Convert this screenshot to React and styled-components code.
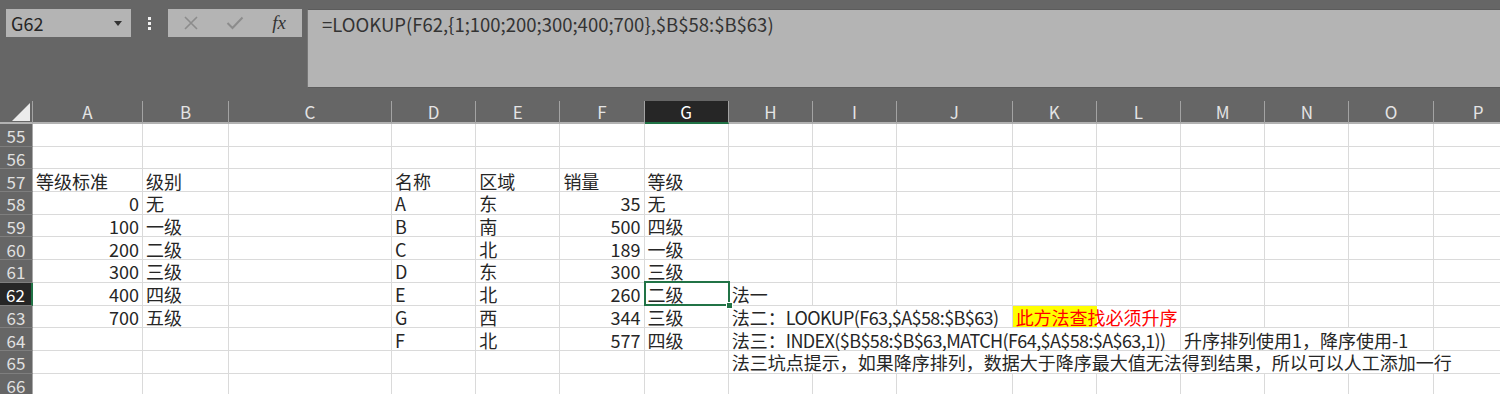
import React from "react";
import styled, { createGlobalStyle, css } from "styled-components";

const COLS =
  "33px 110px 86px 163px repeat(6, 84.2px) 115.5px repeat(5, 84.2px) 90px";
const LETTERS = "ABCDEFGHIJKLMNOP".split("");
const GREEN = "#217346";
const GRID = "#dadada";

const GlobalStyle = createGlobalStyle`
  html, body {
    margin: 0;
    padding: 0;
    background: #ffffff;
    overflow: hidden;
  }
  body {
    font-family: "Noto Sans CJK SC", "Noto Sans", sans-serif;
  }
`;

const Window = styled.div`
  width: 1500px;
  height: 394px;
  overflow: hidden;
  background: #ffffff;
`;

const TopBar = styled.div`
  height: 101px;
  box-sizing: border-box;
  background: #666666;
  display: flex;
  align-items: flex-start;
  padding: 9px 0 0 6px;
`;

const NameBox = styled.div`
  width: 125px;
  height: 28px;
  box-sizing: border-box;
  background: #b4b4b4;
  display: flex;
  align-items: center;
  justify-content: space-between;
  padding: 0 9px 0 5px;
  font-size: 18px;
  color: #262626;
`;

const DropArrow = styled.span`
  width: 0;
  height: 0;
  border-left: 4.5px solid transparent;
  border-right: 4.5px solid transparent;
  border-top: 5px solid #333333;
`;

const Kebab = styled.div`
  width: 3px;
  margin: 8px 17px 0 17px;
  display: flex;
  flex-direction: column;
  gap: 2px;

  span {
    width: 3px;
    height: 3px;
    background: #f2f2f2;
  }
`;

const FxBox = styled.div`
  width: 134px;
  height: 28px;
  box-sizing: border-box;
  background: #b4b4b4;
  display: grid;
  grid-template-columns: repeat(3, 44px);
  align-items: center;
  justify-items: center;
  padding-left: 1px;
`;

const FxLabel = styled.span`
  font-family: "Liberation Serif", "DejaVu Serif", serif;
  font-style: italic;
  font-size: 19px;
  color: #333333;
  line-height: 1;
  margin-top: -2px;
`;

const FormulaInput = styled.div`
  flex: 1;
  height: 79px;
  margin-left: 5px;
  box-sizing: border-box;
  background: #b4b4b4;
  border-top: 1px solid #5c5c5c;
  border-bottom: 1px solid #5c5c5c;
  border-left: 1px solid #777777;
  padding: 3px 0 0 14px;
  font-size: 18.5px;
  line-height: 22px;
  color: #333333;
  white-space: nowrap;
`;

const Row = styled.div`
  display: grid;
  grid-template-columns: ${COLS};
  height: ${({ $h }) => $h};
`;

const Corner = styled.div`
  background: #666666;
  border-right: 1px solid #a3a3a3;
  border-bottom: 2px solid #b2b2b2;
  display: flex;
  align-items: flex-end;
  justify-content: flex-end;
  padding: 0 2px 1px 0;

  span {
    width: 18px;
    height: 18px;
    background: #ececec;
    clip-path: polygon(100% 0, 100% 100%, 0 100%);
  }
`;

const ColHeader = styled.div`
  background: ${({ $active }) => ($active ? "#262626" : "#666666")};
  color: ${({ $active }) => ($active ? "#ffffff" : "#e4e4e4")};
  border-right: 1px solid #a3a3a3;
  border-bottom: 2px solid ${({ $active }) => ($active ? GREEN : "#b2b2b2")};
  display: flex;
  align-items: center;
  justify-content: center;
  font-size: 17px;
  line-height: 1;
`;

const RowHeader = styled.div`
  background: ${({ $active }) => ($active ? "#262626" : "#666666")};
  color: ${({ $active }) => ($active ? "#ffffff" : "#e0e0e0")};
  border-bottom: 1px solid #7e7e7e;
  border-right: ${({ $active }) =>
    $active ? `2px solid ${GREEN}` : "1px solid #a8a8a8"};
  display: flex;
  align-items: center;
  justify-content: center;
  font-size: 17px;
  line-height: 1;
  padding-top: 2px;
`;

const Cell = styled.div`
  grid-column: span ${({ $span }) => $span || 1};
  position: relative;
  box-sizing: border-box;
  background: #ffffff;
  border-right: 1px solid ${GRID};
  border-bottom: 1px solid ${GRID};
  display: flex;
  align-items: center;
  justify-content: ${({ $num }) => ($num ? "flex-end" : "flex-start")};
  padding: 1px 3px 0 3px;
  font-size: 18px;
  line-height: 20px;
  color: ${({ $color }) => $color || "#262626"};
  white-space: nowrap;
  overflow: visible;

  ${({ $fill }) =>
    $fill &&
    css`
      background: linear-gradient(
        to right,
        ${$fill} 0,
        ${$fill} 84px,
        #ffffff 84px
      );
    `}

  ${({ $selected }) =>
    $selected &&
    css`
      &::after {
        content: "";
        position: absolute;
        left: -1px;
        top: -2px;
        right: -2px;
        bottom: -1px;
        border: 2px solid ${GREEN};
        z-index: 2;
      }
      &::before {
        content: "";
        position: absolute;
        right: -5px;
        bottom: -4px;
        width: 5px;
        height: 5px;
        background: ${GREEN};
        border: 1px solid #ffffff;
        z-index: 3;
      }
    `}
`;

// latin runs in the formula notes are set a little tighter than Noto's default
const Latin = styled.span`
  letter-spacing: -0.6px;
`;

const CrossIcon = () => (
  <svg width="16" height="16" viewBox="0 0 16 16">
    <path d="M2 2 L14 14 M14 2 L2 14" stroke="#8c8c8c" strokeWidth="1.6" fill="none" />
  </svg>
);

const CheckIcon = () => (
  <svg width="18" height="14" viewBox="0 0 18 14">
    <path d="M1.5 7 L6.5 12 L16.5 1.5" stroke="#8c8c8c" strokeWidth="2" fill="none" />
  </svg>
);

// row number -> cells keyed by column letter
const SHEET = {
  55: [],
  56: [],
  57: [
    { c: "A", t: "等级标准" },
    { c: "B", t: "级别" },
    { c: "D", t: "名称" },
    { c: "E", t: "区域" },
    { c: "F", t: "销量" },
    { c: "G", t: "等级" },
  ],
  58: [
    { c: "A", t: "0", num: true },
    { c: "B", t: "无" },
    { c: "D", t: "A" },
    { c: "E", t: "东" },
    { c: "F", t: "35", num: true },
    { c: "G", t: "无" },
  ],
  59: [
    { c: "A", t: "100", num: true },
    { c: "B", t: "一级" },
    { c: "D", t: "B" },
    { c: "E", t: "南" },
    { c: "F", t: "500", num: true },
    { c: "G", t: "四级" },
  ],
  60: [
    { c: "A", t: "200", num: true },
    { c: "B", t: "二级" },
    { c: "D", t: "C" },
    { c: "E", t: "北" },
    { c: "F", t: "189", num: true },
    { c: "G", t: "一级" },
  ],
  61: [
    { c: "A", t: "300", num: true },
    { c: "B", t: "三级" },
    { c: "D", t: "D" },
    { c: "E", t: "东" },
    { c: "F", t: "300", num: true },
    { c: "G", t: "三级" },
  ],
  62: [
    { c: "A", t: "400", num: true },
    { c: "B", t: "四级" },
    { c: "D", t: "E" },
    { c: "E", t: "北" },
    { c: "F", t: "260", num: true },
    { c: "G", t: "二级", selected: true },
    { c: "H", t: "法一" },
  ],
  63: [
    { c: "A", t: "700", num: true },
    { c: "B", t: "五级" },
    { c: "D", t: "G" },
    { c: "E", t: "西" },
    { c: "F", t: "344", num: true },
    { c: "G", t: "三级" },
    { c: "H", t: "法二：LOOKUP(F63,$A$58:$B$63)", span: 3, tight: true },
    { c: "K", t: "此方法查找必须升序", span: 2, color: "#ff0000", fill: "#ffff00" },
  ],
  64: [
    { c: "D", t: "F" },
    { c: "E", t: "北" },
    { c: "F", t: "577", num: true },
    { c: "G", t: "四级" },
    {
      c: "H",
      t: "法三：INDEX($B$58:$B$63,MATCH(F64,$A$58:$A$63,1))",
      span: 5,
      tight: true,
    },
    { c: "M", t: "升序排列使用1，降序使用-1", span: 3 },
  ],
  65: [
    {
      c: "H",
      t: "法三坑点提示，如果降序排列，数据大于降序最大值无法得到结果，所以可以人工添加一行",
      span: 9,
    },
  ],
  66: [],
};

const renderText = (spec) => {
  if (!spec.tight) return spec.t;
  return spec.t
    .split(/([\x20-\x7e]+)/)
    .map((part, i) => (i % 2 ? <Latin key={i}>{part}</Latin> : part));
};

const renderCells = (specs) => {
  const out = [];
  let i = 0;
  while (i < LETTERS.length) {
    const spec = specs.find((s) => s.c === LETTERS[i]);
    if (spec) {
      out.push(
        <Cell
          key={LETTERS[i]}
          $span={spec.span}
          $num={spec.num}
          $color={spec.color}
          $fill={spec.fill}
          $selected={spec.selected}
        >
          {renderText(spec)}
        </Cell>
      );
      i += spec.span || 1;
    } else {
      out.push(<Cell key={LETTERS[i]} />);
      i += 1;
    }
  }
  return out;
};

export default function App() {
  return (
    <Window>
      <GlobalStyle />
      <TopBar>
        <NameBox>
          G62
          <DropArrow />
        </NameBox>
        <Kebab>
          <span />
          <span />
          <span />
        </Kebab>
        <FxBox>
          <CrossIcon />
          <CheckIcon />
          <FxLabel>fx</FxLabel>
        </FxBox>
        <FormulaInput>=LOOKUP(F62,{"{"}1;100;200;300;400;700{"}"},$B$58:$B$63)</FormulaInput>
      </TopBar>

      <Row $h="23px">
        <Corner>
          <span />
        </Corner>
        {LETTERS.map((l) => (
          <ColHeader key={l} $active={l === "G"}>
            {l}
          </ColHeader>
        ))}
      </Row>

      {Object.keys(SHEET).map((n) => (
        <Row key={n} $h="22.7px">
          <RowHeader $active={n === "62"}>{n}</RowHeader>
          {renderCells(SHEET[n])}
        </Row>
      ))}
    </Window>
  );
}
